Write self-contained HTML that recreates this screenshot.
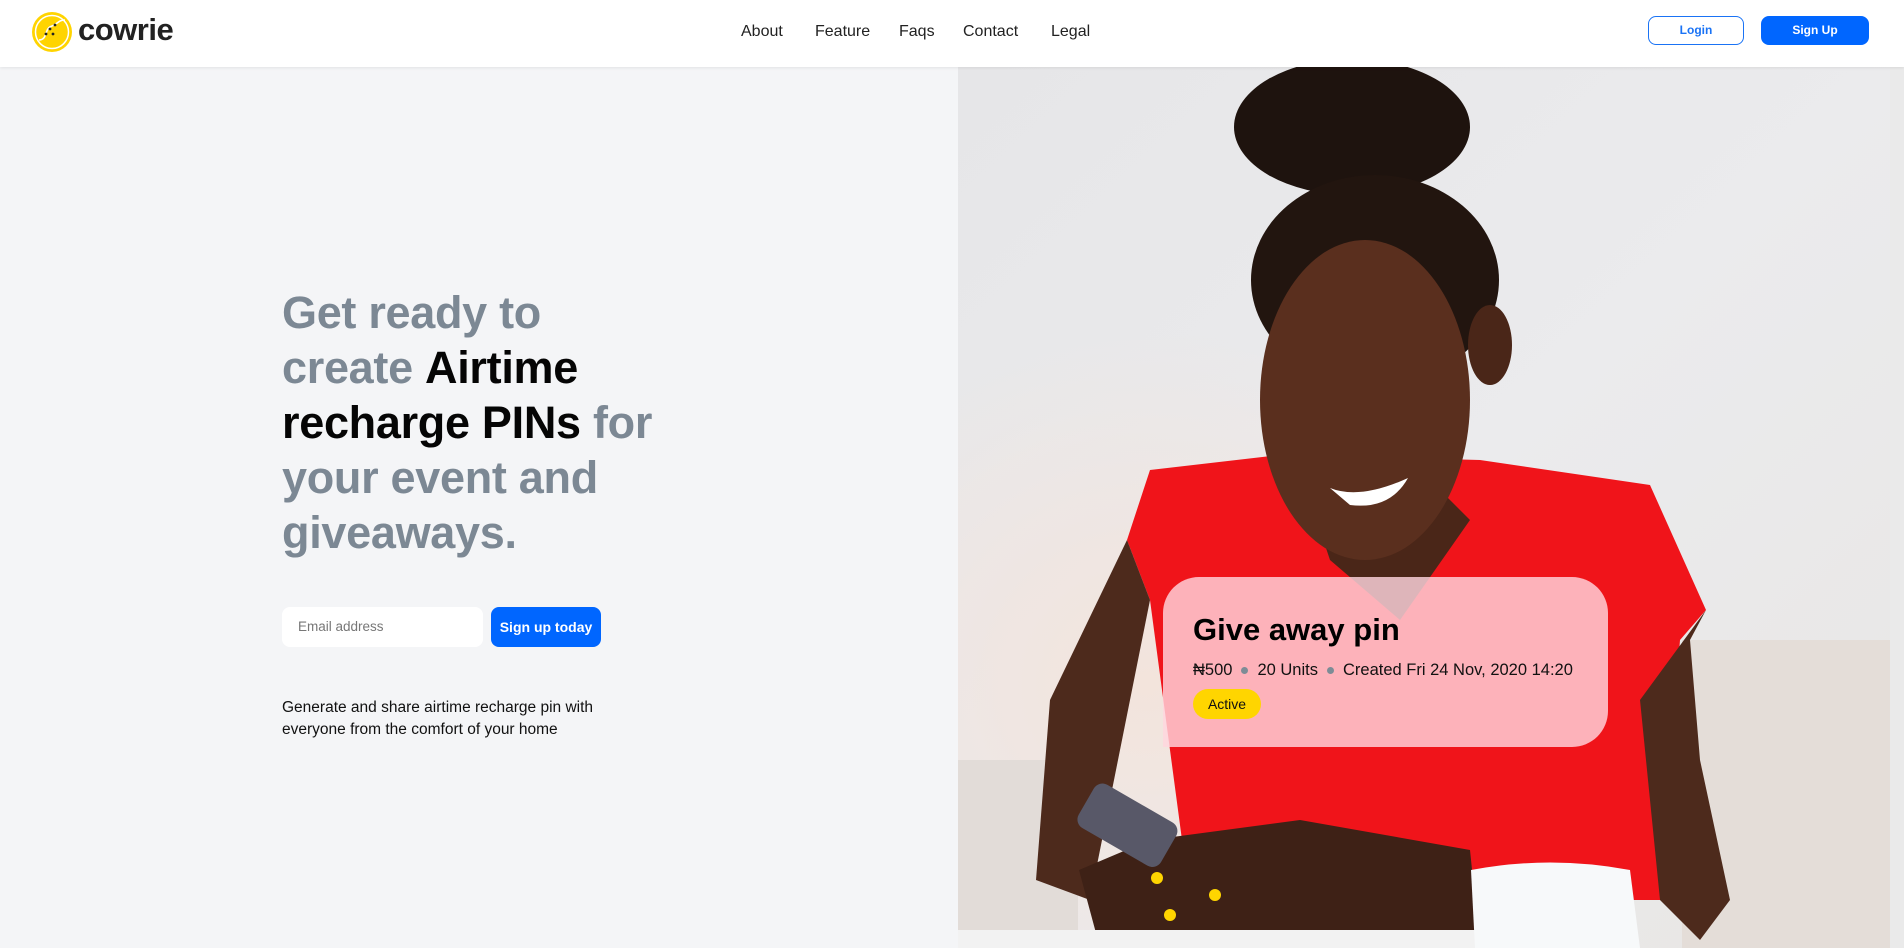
<!DOCTYPE html>
<html><head><meta charset="utf-8"><style>
*{margin:0;padding:0;box-sizing:border-box}
body{width:1904px;height:948px;overflow:hidden;background:#f4f5f7;font-family:"Liberation Sans",sans-serif;position:relative}
.hdr{position:absolute;left:0;top:0;width:1904px;height:67px;background:#fff;box-shadow:0 1px 3px rgba(0,0,0,.08);z-index:5}
.logo{position:absolute;left:30px;top:10px}
.logotxt{position:absolute;left:78px;top:12px;font-size:31px;font-weight:bold;color:#222;letter-spacing:-.5px}
.nav a{position:absolute;top:23px;font-size:16px;color:#222;text-decoration:none}
.btn{position:absolute;top:16px;height:29px;border-radius:8px;font-size:12px;font-weight:bold;text-align:center;line-height:27px}
h1{position:absolute;left:282px;top:285px;font-size:45px;line-height:55px;color:#7c8894;font-weight:bold;white-space:nowrap;letter-spacing:-.3px}
h1 b{color:#050505}
.inp{position:absolute;left:282px;top:607px;width:201px;height:40px;background:#fff;border-radius:8px;font-size:13.5px;color:#777;padding:12px 16px}
.su{position:absolute;left:491px;top:607px;width:110px;height:40px;background:#0066ff;border-radius:8px;color:#fff;font-weight:bold;font-size:14px;text-align:center;line-height:40px}
.p{position:absolute;left:282px;top:697px;font-size:15.5px;line-height:22px;color:#111;width:360px}
.img{position:absolute;left:958px;top:67px;width:946px;height:881px;overflow:hidden}
.card{position:absolute;left:1163px;top:577px;width:445px;height:170px;background:rgba(255,214,222,.82);border-radius:36px 36px 36px 0;padding:0 30px}
.card .t{position:absolute;left:30px;top:35px;font-size:31px;font-weight:bold;color:#000}
.card .m{position:absolute;left:30px;top:84px;font-size:16.5px;color:#111;white-space:nowrap}
.dot{display:inline-block;width:7px;height:7px;border-radius:50%;background:#7d8c96;margin:0 9px;vertical-align:middle}
.act{position:absolute;left:30px;top:112px;width:68px;height:30px;border-radius:15px;background:#ffd500;font-size:14px;text-align:center;line-height:30px;color:#111}
</style></head><body>
<div class="hdr">
<svg class="logo" width="44" height="44" viewBox="0 0 44 44"><circle cx="22" cy="22" r="20" fill="#ffd400"/><circle cx="22" cy="22" r="16.5" fill="none" stroke="#fff" stroke-width="1.5"/><path d="M9 30 C18 30 14 18 22 16 C28 14 28 10 35 10" fill="none" stroke="#fff" stroke-width="1.6"/><circle cx="20" cy="19" r="1.4" fill="#222"/><circle cx="16" cy="24" r="1.4" fill="#222"/><circle cx="23" cy="24" r="1.4" fill="#222"/><circle cx="25" cy="15" r="1.4" fill="#222"/></svg>
<div class="logotxt">cowrie</div>
<div class="nav"><a style="left:741px">About</a><a style="left:815px">Feature</a><a style="left:899px">Faqs</a><a style="left:963px">Contact</a><a style="left:1051px">Legal</a></div>
<div class="btn" style="left:1648px;width:96px;border:1.5px solid #1a73f5;color:#1a73f5">Login</div>
<div class="btn" style="left:1761px;width:108px;background:#0066ff;color:#fff;line-height:29px">Sign Up</div>
</div>
<h1>Get ready to<br>create <b>Airtime</b><br><b>recharge PINs</b> for<br>your event and<br>giveaways.</h1>
<div class="inp">Email address</div>
<div class="su">Sign up today</div>
<div class="p">Generate and share airtime recharge pin with everyone from the comfort of your home</div>
<div class="img">
<svg width="946" height="881" viewBox="958 67 946 881">
<defs><linearGradient id="bg" x1="0" y1="0" x2="1" y2="1"><stop offset="0" stop-color="#e6e6e8"/><stop offset=".5" stop-color="#ebebed"/><stop offset="1" stop-color="#e8e6e4"/></linearGradient>
<radialGradient id="warm" cx="0.2" cy="0.7" r="0.4"><stop offset="0" stop-color="#f3e4dc"/><stop offset="1" stop-color="#f3e4dc" stop-opacity="0"/></radialGradient></defs>
<rect x="958" y="67" width="946" height="881" fill="url(#bg)"/>
<rect x="958" y="67" width="946" height="881" fill="url(#warm)"/>
<rect x="1682" y="640" width="222" height="308" fill="#e4ddd8"/>
<rect x="958" y="760" width="120" height="188" fill="#e2dcd8"/>
<path d="M1127 540 L1150 470 L1280 455 L1480 460 L1650 485 L1706 610 L1680 640 L1660 900 L1190 900 L1150 600 Z" fill="#f0141a"/>
<path d="M1300 470 L1420 470 L1470 520 L1400 620 L1330 560 Z" fill="#4a2618"/>
<path d="M1127 540 L1150 600 L1110 800 L1090 900 L1036 880 L1050 700 Z" fill="#4d2a1c"/>
<path d="M1706 610 L1690 640 L1700 760 L1730 900 L1700 940 L1660 900 L1640 700 Z" fill="#4d2a1c"/>
<path d="M1079 870 L1150 840 L1300 820 L1470 850 L1480 948 L1100 948 Z" fill="#3e2116"/>
<rect x="1080" y="800" width="95" height="50" rx="10" transform="rotate(30 1127 825)" fill="#585868"/>
<circle cx="1157" cy="878" r="6" fill="#ffd500"/><circle cx="1170" cy="915" r="6" fill="#ffd500"/><circle cx="1168" cy="938" r="6" fill="#ffd500"/><circle cx="1215" cy="895" r="6" fill="#ffd500"/>
<ellipse cx="1352" cy="127" rx="118" ry="68" fill="#1e130e"/>
<ellipse cx="1375" cy="280" rx="124" ry="105" fill="#22150f"/>
<ellipse cx="1365" cy="400" rx="105" ry="160" fill="#5a2f1e"/>
<ellipse cx="1490" cy="345" rx="22" ry="40" fill="#4a2618"/>
<path d="M1330 488 Q1360 500 1408 478 Q1390 510 1350 505 Z" fill="#fff"/>
<rect x="958" y="930" width="520" height="18" fill="#f2f2f2"/>
<path d="M1471 870 Q1550 855 1630 870 L1640 948 L1475 948 Z" fill="#f7f9fa"/>
<rect x="1890" y="67" width="14" height="881" fill="#eaeaea"/>
</svg>
</div>
<div class="card">
<div class="t">Give away pin</div>
<div class="m">₦500<span class="dot"></span>20 Units<span class="dot"></span>Created Fri 24 Nov, 2020 14:20</div>
<div class="act">Active</div>
</div>
</body></html>
